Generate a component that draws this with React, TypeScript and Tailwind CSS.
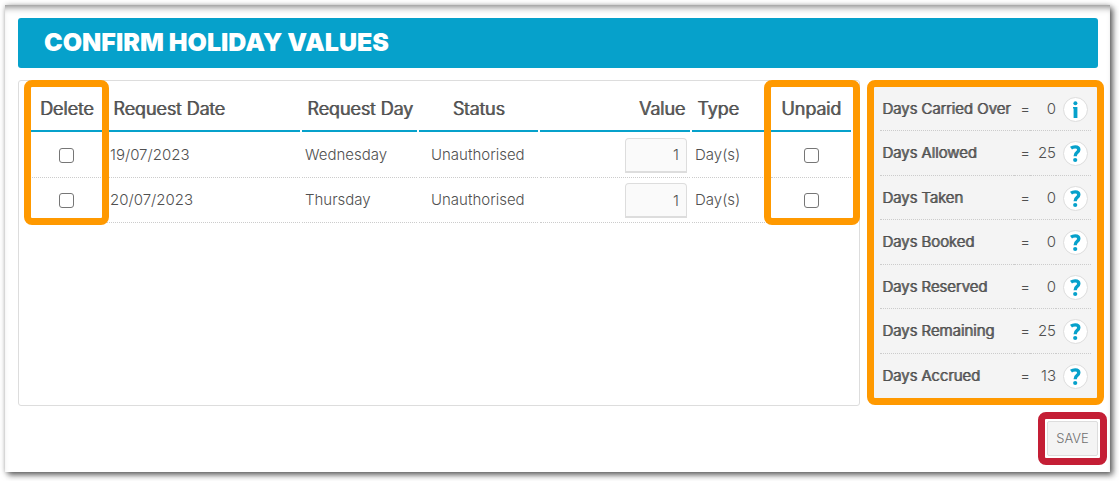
import { useState } from 'react';

const requests = [
    { id: 1, date: '19/07/2023', day: 'Wednesday', status: 'Unauthorised', value: '1', type: 'Day(s)' },
    { id: 2, date: '20/07/2023', day: 'Thursday', status: 'Unauthorised', value: '1', type: 'Day(s)' },
];

const totals = [
    { label: 'Days Carried Over', value: 0, info: true },
    { label: 'Days Allowed', value: 25 },
    { label: 'Days Taken', value: 0 },
    { label: 'Days Booked', value: 0 },
    { label: 'Days Reserved', value: 0 },
    { label: 'Days Remaining', value: 25 },
    { label: 'Days Accrued', value: 13 },
];

const checkbox = 'block mx-auto w-[15px] h-[15px] appearance-none rounded-[3px] border border-[#767676] bg-white checked:bg-[#06a1cb]';

function InfoIcon() {
    return (
        <svg viewBox="0 0 23 23" className="w-full h-full" fill="#06a1cb" aria-hidden="true">
            <circle cx="11.4" cy="5.3" r="2" />
            <path d="M9 9h4.4v10.9H9.6V10.6H9z" />
        </svg>
    );
}

function QuestionIcon() {
    return (
        <svg viewBox="0 0 23 23" className="w-full h-full" aria-hidden="true">
            <path
                d="M7 6.1C8.4 5.1 9.8 4.9 11.2 4.9c2.5 0 3.6 1.1 3.6 2.8 0 1.4-.7 2.1-1.9 3-1.3.9-1.7 1.7-1.7 3.6"
                fill="none"
                stroke="#06a1cb"
                strokeWidth="3.4"
            />
            <circle cx="11.2" cy="18" r="2.1" fill="#06a1cb" />
        </svg>
    );
}

export default function App() {
    const [rows, setRows] = useState(requests);

    const handleValue = (id: number, value: string) => {
        setRows(rows.map((row) => (row.id === id ? { ...row, value } : row)));
    };

    const th = 'h-[51px] pt-[6px] border-b-2 border-[#06a1cb] font-light text-shadow-[1px_0_0_#505050] text-lg leading-6 whitespace-nowrap';
    const td = 'h-[45px] group-first:h-[46px] pt-px border-b border-dotted border-[#ccc]';

    return (
        <div className="pt-[5px] pl-[5px] pr-[9px] pb-[9px] bg-white font-['Inter',sans-serif] text-[#505050]">
            <div className="bg-white p-[13px] pr-3 pb-[7px] shadow-[3px_3px_6px_rgba(0,0,0,0.6),0_0_5px_rgba(0,0,0,0.2),inset_0_7px_7px_-5px_rgba(0,0,0,0.5)]">
                <header className="h-[50px] flex items-center px-[26px] pb-[2px] rounded-[3px] bg-[#06a1cb]">
                    <h1 className="text-[25px] leading-8 font-black text-white uppercase">Confirm Holiday Values</h1>
                </header>

                <div className="flex mt-3 -mr-[6px] gap-[7px]">
                    {/* Requests */}
                    <section className="relative flex-1 min-h-[326px] pl-[7px] pr-[6px] border border-[#ddd] rounded-[3px]">
                        <table className="w-full table-fixed border-separate border-spacing-x-[2px] border-spacing-y-0 text-[15px] font-light">
                            <colgroup>
                                <col className="w-[77px]" />
                                <col className="w-[193px]" />
                                <col className="w-[115px]" />
                                <col className="w-[119px]" />
                                <col className="w-[150px]" />
                                <col className="w-[77px]" />
                                <col className="w-[80px]" />
                            </colgroup>
                            <thead>
                                <tr>
                                    <th className={`${th} text-center`}>Delete</th>
                                    <th className={`${th} text-left pl-[6px]`}>Request Date</th>
                                    <th className={`${th} text-left pl-[5px]`}>Request Day</th>
                                    <th className={`${th} text-center`}>Status</th>
                                    <th className={`${th} text-right pr-[5px]`}>Value</th>
                                    <th className={`${th} text-left pl-[5px]`}>Type</th>
                                    <th className={`${th} text-center`}>Unpaid</th>
                                </tr>
                            </thead>
                            <tbody>
                                {rows.map((row) => (
                                    <tr key={row.id} className="group">
                                        <td className={td}>
                                            <input type="checkbox" aria-label={`Delete ${row.date}`} className={checkbox} />
                                        </td>
                                        <td className={`${td} pl-[3px]`}>{row.date}</td>
                                        <td className={`${td} pl-[3px]`}>{row.day}</td>
                                        <td className={`${td} pl-3`}>{row.status}</td>
                                        <td className={`${td} pr-[3px]`}>
                                            <input
                                                type="text"
                                                aria-label={`Value ${row.date}`}
                                                value={row.value}
                                                onChange={(e) => handleValue(row.id, e.target.value)}
                                                className="block ml-auto w-[62px] h-[35px] px-[7px] text-right bg-[#fafafa] border border-b-2 border-[#ddd] rounded-t-[4px]"
                                            />
                                        </td>
                                        <td className={`${td} pl-[3px]`}>{row.type}</td>
                                        <td className={td}>
                                            <input type="checkbox" aria-label={`Unpaid ${row.date}`} className={checkbox} />
                                        </td>
                                    </tr>
                                ))}
                            </tbody>
                        </table>

                        {/* Column highlights */}
                        <div className="absolute -top-px left-[5px] w-[85px] h-[145px] border-[7px] border-[#ff9900] rounded-lg pointer-events-none" />
                        <div className="absolute -top-px -right-px w-[96px] h-[145px] border-[7px] border-[#ff9900] rounded-lg pointer-events-none" />
                    </section>

                    {/* Totals */}
                    <aside className="w-[237px] self-start px-[6px] bg-[#f4f4f4] border-[7px] border-[#ff9900] rounded-lg">
                        <table className="w-full border-separate border-spacing-0 text-[15px]">
                            <tbody>
                                {totals.map((total) => (
                                    <tr key={total.label} className="group">
                                        <th
                                            scope="row"
                                            className="group-odd:h-[44px] group-even:h-[45px] pt-px pl-[2px] text-left font-light text-shadow-[1px_0_0_#505050] whitespace-nowrap border-b border-dotted border-[#ccc] group-last:border-0"
                                        >
                                            {total.label}
                                        </th>
                                        <td className="w-4 pt-px text-right font-light border-b border-dotted border-[#ccc] group-last:border-0">=</td>
                                        <td className="w-[26px] pt-px text-right font-light border-b border-dotted border-[#ccc] group-last:border-0">{total.value}</td>
                                        <td className="w-[35px] pt-px pl-[7px] border-b border-dotted border-[#ccc] group-last:border-0">
                                            <button
                                                type="button"
                                                aria-label={`About ${total.label}`}
                                                className="block w-[25px] h-[25px] rounded-full bg-white border border-[#ddd]"
                                            >
                                                {total.info ? <InfoIcon /> : <QuestionIcon />}
                                            </button>
                                        </td>
                                    </tr>
                                ))}
                            </tbody>
                        </table>
                    </aside>
                </div>

                <div className="flex justify-end mt-[6px] -mr-[9px]">
                    <div className="p-[2px] border-[7px] border-[#c41e35] rounded-lg">
                        <button
                            type="button"
                            className="block w-[51px] h-[35px] bg-[#f4f4f4] border border-[#ddd] rounded-[2px] text-[13px] font-light text-[#707070] uppercase"
                        >
                            Save
                        </button>
                    </div>
                </div>
            </div>
        </div>
    );
}
